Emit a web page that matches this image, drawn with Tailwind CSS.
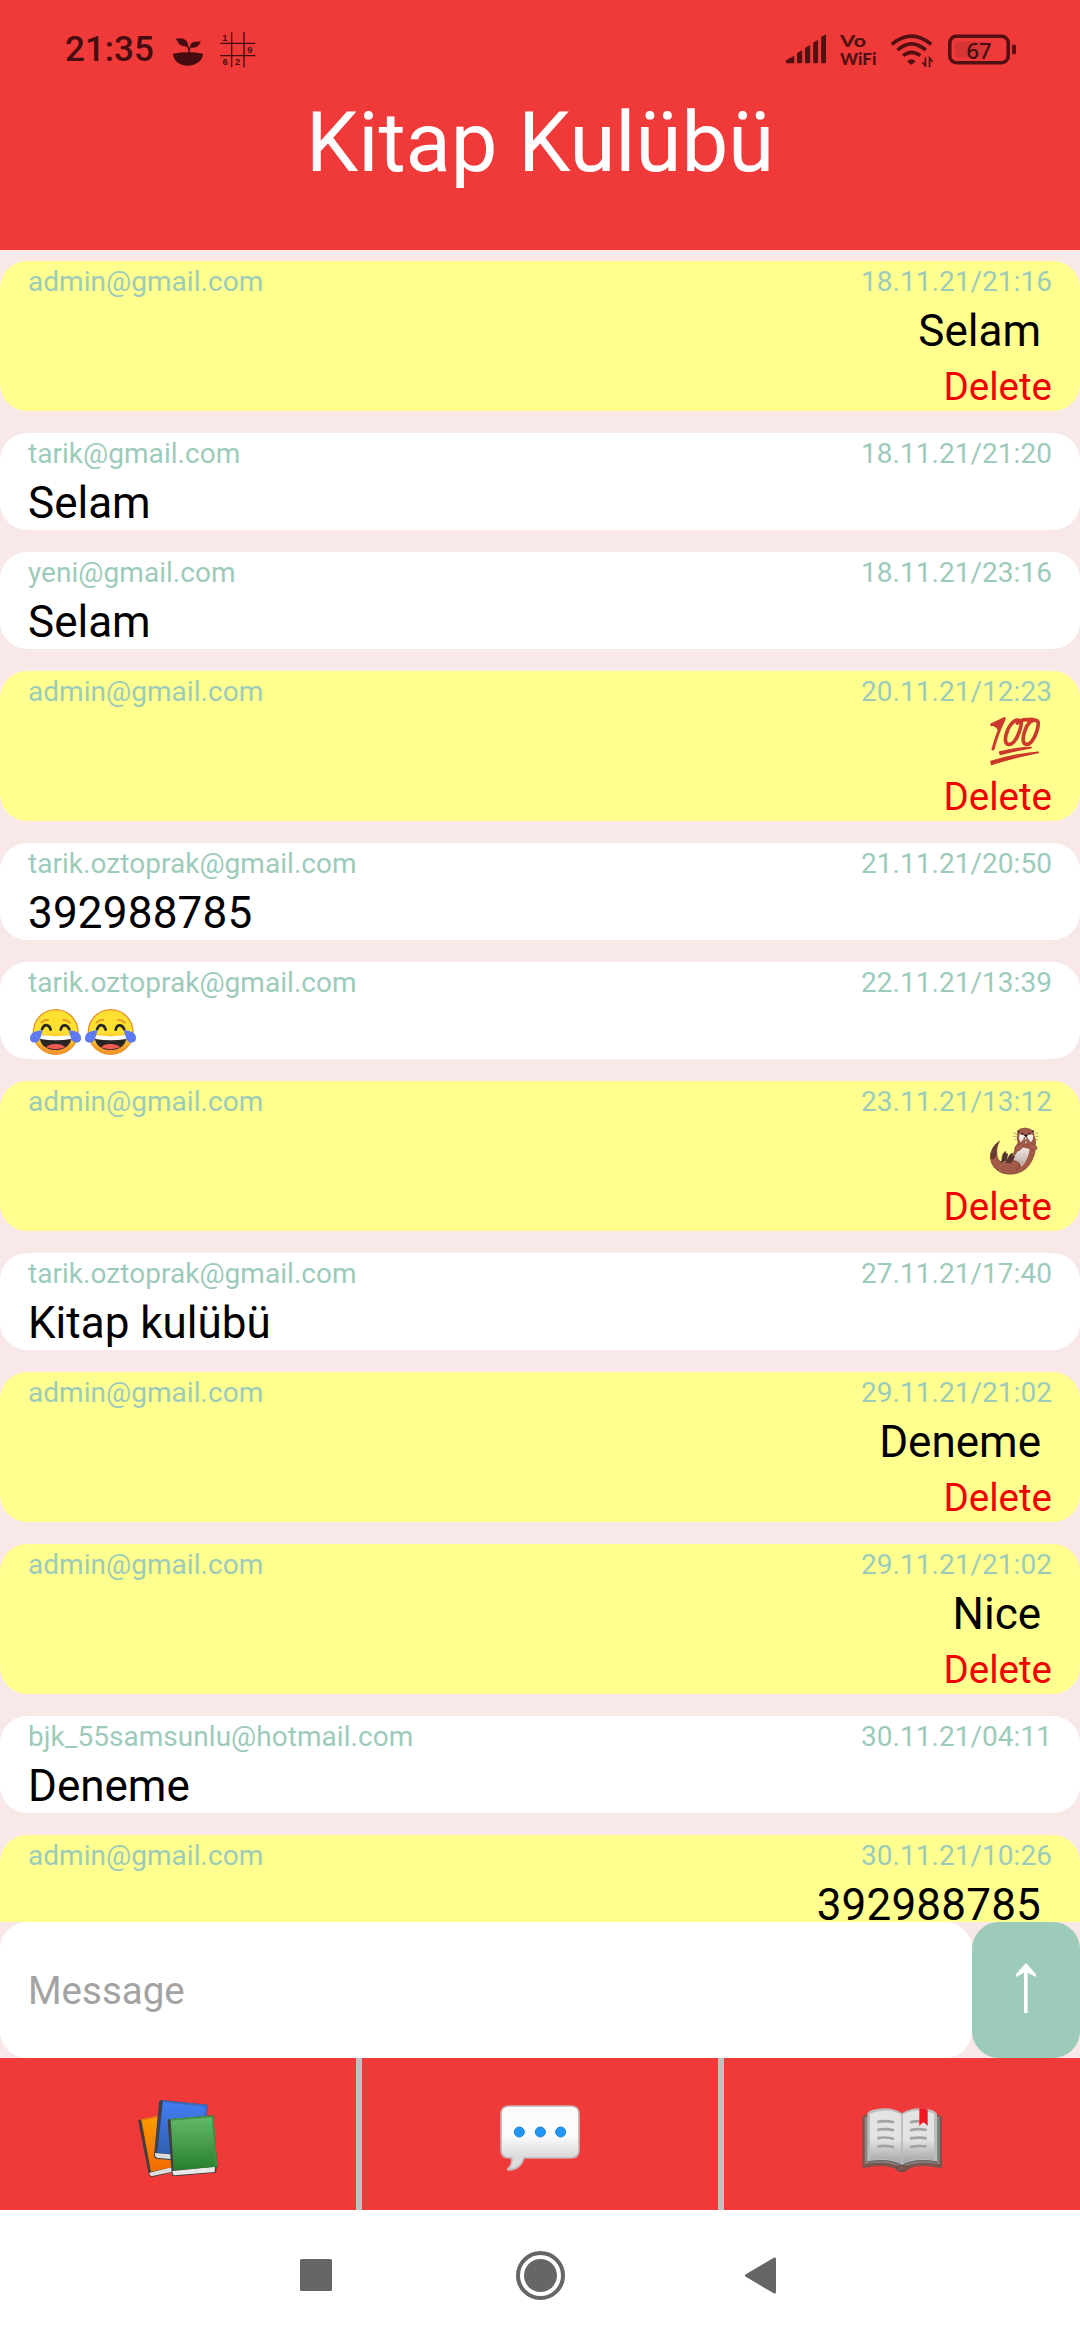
<!DOCTYPE html>
<html lang="tr">
<head>
<meta charset="utf-8">
<title>Kitap Kulübü</title>
<script src="https://cdn.jsdelivr.net/npm/@tailwindcss/browser@4"></script>
</head>
<body class="h-[2340px] w-[1080px] overflow-hidden bg-white font-[Roboto,sans-serif]">
<div class="flex h-[2340px] w-[1080px] flex-col">

  <header class="flex h-[250px] flex-none flex-col bg-[#f03a39] text-[#460d10]">
    <div class="flex h-[94px] items-start justify-between pt-8 pr-[64px] pl-[65px]">
      <div class="flex h-9 items-center">
        <span class="w-[108px] text-[35px] leading-9 font-medium">21:35</span>
        <!-- sprout -->
        <svg class="h-9 w-[30px]" viewBox="502 94 87 108" preserveAspectRatio="none" fill="currentColor">
          <path d="M502 159Q545 151 589 159Q589 174 574 186Q561 195 545 195Q528 195 516 186Q502 174 502 159Z"/>
          <path d="M510 114Q531 110 541 120Q547 127 546 138Q530 140 520 131Q515 120 510 114Z"/>
          <path d="M583 122Q575 124 566 123Q551 125 551 140Q566 143 575 136Q580 130 583 122Z"/>
          <path d="M540 132Q549 137 549 158M549 145Q552 139 560 137" fill="none" stroke="currentColor" stroke-width="4.500"/>
        </svg>
        <!-- number grid -->
        <svg class="ml-[17px] h-9 w-[36px]" viewBox="639 94 105 108" preserveAspectRatio="none" fill="currentColor">
          <path d="M673 94V200M709 94V200M640 128H742M640 165H742" stroke="currentColor" stroke-width="4"/>
          <g font-family="Liberation Sans, sans-serif" font-size="27" font-weight="bold" text-anchor="middle">
            <text x="653" y="120">1</text><text x="726" y="157">9</text><text x="654" y="194">6</text><text x="690" y="194">2</text>
          </g>
        </svg>
      </div>
      <div class="flex h-9 items-center">
        <!-- signal -->
        <svg class="h-9 w-[40px]" viewBox="714 95 116 108" preserveAspectRatio="none" fill="#521012">
          <path d="M714 180L738 166V189H717Q714 189 714 186ZM746 158L761 150V186Q761 189 758 189H749Q746 189 746 186ZM769 143L784 134V186Q784 189 781 189H772Q769 189 769 186ZM793 127L807 118V186Q807 189 804 189H796Q793 189 793 186ZM816 110L830 102V186Q830 189 827 189H819Q816 189 816 186Z"/>
        </svg>
        <svg class="ml-[14px] h-9 w-[37px]" viewBox="0 0 37 36" fill="#521012" font-family="Lato, sans-serif" font-weight="900">
          <text x="0" y="15" font-size="17.500" textLength="26" lengthAdjust="spacingAndGlyphs">Vo</text>
          <text x="0" y="32.500" font-size="17.500" textLength="36.500" lengthAdjust="spacingAndGlyphs">WiFi</text>
        </svg>
        <!-- wifi -->
        <svg class="ml-[13px] h-9 w-[43px]" viewBox="1015 95 125 108" preserveAspectRatio="none" fill="none" stroke="#521012">
          <path d="M1020 132Q1077 83 1135 132M1037 149Q1077 112 1119 149M1053 166Q1077 146 1103 166" stroke-width="10.500"/>
          <path d="M1065 183Q1077 170 1090 183L1081 191Q1077 194 1073 191Z" fill="#521012" stroke="none"/>
          <path d="M1118 171V200M1109 186L1118 197M1130 201V173L1139 184" stroke-width="5"/>
        </svg>
        <!-- battery -->
        <svg class="ml-[15px] h-9 w-[68px]" viewBox="948 31.500 68 36">
          <rect x="949.800" y="35.800" width="58.400" height="26.400" rx="6.500" fill="none" stroke="#521012" stroke-width="3.600"/>
          <rect x="955" y="41" width="31" height="16" rx="2" fill="#d63435"/>
          <rect x="1012" y="44" width="4" height="10" rx="1.800" fill="#521012"/>
          <text x="979" y="58" text-anchor="middle" font-family="Noto Sans, sans-serif" font-weight="500" font-size="22" fill="#460d10">67</text>
        </svg>
      </div>
    </div>
    <h1 class="text-center text-[83.2px] leading-[98px] text-white">Kitap Kulübü</h1>
  </header>

  <main class="flex h-[1672px] flex-none flex-col gap-[22px] overflow-hidden bg-[#f8e8e8] pt-[11px] text-[44px] leading-[52px] text-black">

    <article class="h-[150px] flex-none rounded-[27px] bg-[#ffff90] px-7 pt-[3px]">
      <div class="flex justify-between text-[28px] leading-9 tracking-[0.04px] text-[#9dcbba]"><span>admin@gmail.com</span><time>18.11.21/21:16</time></div>
      <p class="mt-[5px] pr-[11px] text-right">Selam</p>
      <p class="mt-[6px] text-right text-[38.5px] leading-[48px] text-[#f00000]">Delete</p>
    </article>

    <article class="h-[97px] flex-none rounded-[27px] bg-white px-7 pt-[3px]">
      <div class="flex justify-between text-[28px] leading-9 tracking-[0.04px] text-[#9dcbba]"><span>tarik@gmail.com</span><time>18.11.21/21:20</time></div>
      <p class="mt-[5px]">Selam</p>
    </article>

    <article class="h-[97px] flex-none rounded-[27px] bg-white px-7 pt-[3px]">
      <div class="flex justify-between text-[28px] leading-9 tracking-[0.04px] text-[#9dcbba]"><span>yeni@gmail.com</span><time>18.11.21/23:16</time></div>
      <p class="mt-[5px]">Selam</p>
    </article>

    <article class="h-[150px] flex-none rounded-[27px] bg-[#ffff90] px-7 pt-[3px]">
      <div class="flex justify-between text-[28px] leading-9 tracking-[0.04px] text-[#9dcbba]"><span>admin@gmail.com</span><time>20.11.21/12:23</time></div>
      <div class="mt-[5px] flex justify-end pr-[11px]">
        <!-- hundred points -->
        <svg class="h-[52px] w-[55px]" viewBox="78 75 165 156" fill="none" stroke="#cc3a2d" stroke-linecap="round" stroke-linejoin="round">
          <path d="M95 104Q114 96 133 86Q113 127 99 177" stroke-width="9"/>
          <path d="M95 105Q114 98 128 89L115 120Q110 107 95 105Z" fill="#cc3a2d" stroke-width="4"/>
          <path d="M179 92C166 85 151 101 143 120C134 143 133 161 145 163C157 166 171 147 178 125C185 104 187 92 176 91" stroke-width="11"/>
          <path d="M172 99Q187 87 200 89M229 92C216 85 202 101 195 121C187 144 187 161 198 163C210 166 223 147 230 125C236 105 238 92 227 91Q215 86 200 90" stroke-width="11"/>
          <path d="M119 186Q166 174 213 173Q166 181 121 193ZM93 215Q160 193 235 187Q157 203 95 223Z" fill="#c93024" stroke-width="5"/>
        </svg>
      </div>
      <p class="mt-[6px] text-right text-[38.5px] leading-[48px] text-[#f00000]">Delete</p>
    </article>

    <article class="h-[97px] flex-none rounded-[27px] bg-white px-7 pt-[3px]">
      <div class="flex justify-between text-[28px] leading-9 tracking-[0.04px] text-[#9dcbba]"><span>tarik.oztoprak@gmail.com</span><time>21.11.21/20:50</time></div>
      <p class="mt-[5px] tracking-[0.2px]">392988785</p>
    </article>

    <article class="h-[97px] flex-none rounded-[27px] bg-white px-7 pt-[3px]">
      <div class="flex justify-between text-[28px] leading-9 tracking-[0.04px] text-[#9dcbba]"><span>tarik.oztoprak@gmail.com</span><time>22.11.21/13:39</time></div>
      <div class="mt-[5px] flex">
        <!-- tears of joy, twice -->
        <svg class="h-[52px] w-[110px]" viewBox="84 48 330 156">
          <defs>
            <linearGradient id="face" x1="0" y1="0" x2="0" y2="1"><stop offset="0.500" stop-color="#fde030"/><stop offset="0.920" stop-color="#f9962a"/></linearGradient>
            <g id="joy">
              <circle cx="167" cy="126" r="67" fill="url(#face)" stroke="#e5932a" stroke-width="4"/>
              <path d="M125 97Q133 88 144 90M190 90Q201 89 209 98" fill="none" stroke="#e8952a" stroke-width="6" stroke-linecap="round"/>
              <path d="M126 118Q132 103 141 106Q149 107 152 119M182 119Q185 106 194 106Q203 106 208 118" fill="none" stroke="#2a2624" stroke-width="8" stroke-linecap="round"/>
              <path d="M118 136Q166 143 216 136Q212 180 167 180Q121 180 118 136Z" fill="#2a2525"/>
              <path d="M119 135Q166 142 215 135L213 147Q167 155 121 147Z" fill="#fff"/>
              <path d="M137 172Q151 160 166 162Q182 160 197 172Q167 183 137 172Z" fill="#ef5b52"/>
              <path d="M128 121Q99 122 91 137Q87 152 98 157Q111 162 118 150Q123 141 128 121ZM206 121Q235 122 242 137Q246 152 235 157Q223 162 216 150Q211 141 206 121Z" fill="#5e7af2"/>
            </g>
          </defs>
          <use href="#joy"/><use href="#joy" x="165"/>
        </svg>
      </div>
    </article>

    <article class="h-[150px] flex-none rounded-[27px] bg-[#ffff90] px-7 pt-[3px]">
      <div class="flex justify-between text-[28px] leading-9 tracking-[0.04px] text-[#9dcbba]"><span>admin@gmail.com</span><time>23.11.21/13:12</time></div>
      <div class="mt-[5px] flex justify-end pr-[11px]">
        <!-- otter -->
        <svg class="h-[52px] w-[55px]" viewBox="78 75 165 156" stroke-linecap="round" stroke-linejoin="round">
          <defs><linearGradient id="belly" x1="0" y1="0" x2="0" y2="1"><stop offset="0" stop-color="#f0e9e4"/><stop offset="1" stop-color="#b9a39b"/></linearGradient></defs>
          <path d="M118 124Q91 142 91 173Q94 205 126 219Q157 228 186 214Q205 204 217 179Q228 158 224 143Q231 122 221 106Q222 91 209 87Q196 81 181 87Q170 91 173 103Q171 116 174 128Q164 144 159 168Q145 190 129 188Q110 184 110 153Q110 138 118 124Z" fill="#a35a47" stroke="#7a4336" stroke-width="2"/>
          <path d="M118 124Q91 142 91 173Q96 181 103 176Q112 165 110 150Q111 137 118 124Z" fill="#6b3b32"/>
          <path d="M186 142Q164 158 160 181Q177 187 185 201Q205 180 209 147Z" fill="url(#belly)"/>
          <path d="M124 188L128 164L136 154L137 160L143 162L139 183M137 188L149 165L157 159V166L163 171L151 190" fill="#55342f" stroke="#3f2926" stroke-width="2"/>
          <path d="M137 187Q165 177 177 189Q183 201 169 210" fill="none" stroke="#6b382c" stroke-width="2.500"/>
          <path d="M178 105Q183 99 195 109Q207 99 219 105Q221 123 208 130H187Q175 124 178 105Z" fill="#f4eeea"/>
          <path d="M194 113Q200 124 190 137Q185 148 176 152Q163 151 165 141Q171 134 181 132ZM200 113Q196 124 205 137Q211 150 224 152Q234 148 230 140Q225 134 215 131Z" fill="#a85e4b" stroke="#7a4336" stroke-width="2"/>
          <circle cx="187" cy="101" r="3" fill="#251b1a"/><circle cx="208" cy="101" r="3" fill="#251b1a"/>
          <path d="M192 105Q198 101 204 105L198 113Z" fill="#251b1a"/>
          <path d="M172 103L160 98M172 109L160 109M174 114L164 119M222 103L234 98M222 109L235 109M221 114L233 119" stroke="#8c7757" stroke-width="1.800"/>
          <circle cx="176" cy="94" r="3.500" fill="#55342f"/><circle cx="219" cy="94" r="3.500" fill="#55342f"/>
        </svg>
      </div>
      <p class="mt-[6px] text-right text-[38.5px] leading-[48px] text-[#f00000]">Delete</p>
    </article>

    <article class="h-[97px] flex-none rounded-[27px] bg-white px-7 pt-[3px]">
      <div class="flex justify-between text-[28px] leading-9 tracking-[0.04px] text-[#9dcbba]"><span>tarik.oztoprak@gmail.com</span><time>27.11.21/17:40</time></div>
      <p class="mt-[5px]">Kitap kulübü</p>
    </article>

    <article class="h-[150px] flex-none rounded-[27px] bg-[#ffff90] px-7 pt-[3px]">
      <div class="flex justify-between text-[28px] leading-9 tracking-[0.04px] text-[#9dcbba]"><span>admin@gmail.com</span><time>29.11.21/21:02</time></div>
      <p class="mt-[5px] pr-[11px] text-right">Deneme</p>
      <p class="mt-[6px] text-right text-[38.5px] leading-[48px] text-[#f00000]">Delete</p>
    </article>

    <article class="h-[150px] flex-none rounded-[27px] bg-[#ffff90] px-7 pt-[3px]">
      <div class="flex justify-between text-[28px] leading-9 tracking-[0.04px] text-[#9dcbba]"><span>admin@gmail.com</span><time>29.11.21/21:02</time></div>
      <p class="mt-[5px] pr-[11px] text-right">Nice</p>
      <p class="mt-[6px] text-right text-[38.5px] leading-[48px] text-[#f00000]">Delete</p>
    </article>

    <article class="h-[97px] flex-none rounded-[27px] bg-white px-7 pt-[3px]">
      <div class="flex justify-between text-[28px] leading-9 tracking-[0.04px] text-[#9dcbba]"><span>bjk_55samsunlu@hotmail.com</span><time>30.11.21/04:11</time></div>
      <p class="mt-[5px]">Deneme</p>
    </article>

    <article class="h-[150px] flex-none rounded-[27px] bg-[#ffff90] px-7 pt-[3px]">
      <div class="flex justify-between text-[28px] leading-9 tracking-[0.04px] text-[#9dcbba]"><span>admin@gmail.com</span><time>30.11.21/10:26</time></div>
      <p class="mt-[5px] pr-[11px] text-right tracking-[0.2px]">392988785</p>
    </article>
  </main>

  <form class="flex h-[136px] flex-none bg-[#f8e8e8]">
    <div class="flex w-[972px] items-center rounded-[27px] bg-white px-7 pt-0.5 text-[38.5px] text-[#a3a3a3]">Message</div>
    <button type="button" class="flex w-[108px] items-center justify-center rounded-[27px] bg-[#9dcbba]">
      <svg class="-mt-1 h-[50px] w-5" viewBox="708 399 60 150"><path d="M738 399L768 433V441L743 428V549H732V428L708 441V433Z" fill="#fff"/></svg>
    </button>
  </form>

  <nav class="grid h-[152px] flex-none grid-cols-3 gap-1.5 bg-[#c1c1c1]">
    <a class="flex items-center justify-center bg-[#f03a39]">
      <!-- books -->
      <svg class="size-[90px]" viewBox="99 117 270 270" stroke-linejoin="round">
        <defs>
          <linearGradient id="orange" x1="0" y1="0" x2="0" y2="1"><stop stop-color="#ff9c00"/><stop offset="1" stop-color="#f06c00"/></linearGradient>
          <linearGradient id="blue" x1="0" y1="0" x2="0" y2="1"><stop stop-color="#427ff5"/><stop offset="1" stop-color="#305dac"/></linearGradient>
          <linearGradient id="green" x1="0" y1="0" x2="0" y2="1"><stop stop-color="#66ba6a"/><stop offset="1" stop-color="#28802d"/></linearGradient>
        </defs>
        <path d="M115 215Q114 209 121 208L210 193L239 362L157 381Q149 383 146 373Z" fill="#493c3b"/>
        <path d="M148 368L225 349V364L157 378Q149 379 148 368Z" fill="#ddd"/>
        <path d="M124 209L205 192L235 347L153 365Z" fill="url(#orange)"/>
        <path d="M122 210L205 194" stroke="#e77d08" stroke-width="5"/>
        <path d="M177 156Q178 150 185 150L323 164L311 338L168 326Q161 324 162 316Z" fill="#3d4250"/>
        <path d="M165 309L300 320V335L171 323Q164 321 165 309Z" fill="#dadcdd"/>
        <path d="M189 152L323 165L307 320L172 308Z" fill="url(#blue)"/>
        <path d="M188 154L320 167L316 205" fill="none" stroke="#3d69bd" stroke-width="6"/>
        <path d="M203 214Q202 208 210 207L340 196L352 345L348 368L223 379Q216 379 215 371Z" fill="#423f40"/>
        <path d="M218 363L345 350L344 366L223 376Q217 375 218 363Z" fill="#e9e9e9"/>
        <path d="M212 207L340 197L352 350L221 361Z" fill="url(#green)"/>
        <path d="M211 210L338 199L349 349" fill="none" stroke="#3f9443" stroke-width="5"/>
      </svg>
    </a>
    <a class="flex items-center justify-center bg-[#f03a39]">
      <!-- speech balloon -->
      <svg class="size-[90px]" viewBox="105 87 270 270">
        <defs><linearGradient id="balloon" x1="0" y1="0" x2="0" y2="1"><stop offset="0.450" stop-color="#fcfcfc"/><stop offset="0.780" stop-color="#dcdcdc"/></linearGradient></defs>
        <path d="M148 138H332Q357 138 357 162V270Q357 294 332 294H192Q180 331 144 330Q141 328 145 325Q157 314 155 294H148Q123 294 123 270V162Q123 138 148 138Z" fill="url(#balloon)" stroke="#c5b3b3" stroke-width="5"/>
        <g fill="#2196f3" stroke="#1e83d3" stroke-width="3"><circle cx="178" cy="216" r="15"/><circle cx="241" cy="216" r="15"/><circle cx="302" cy="216" r="15"/></g>
      </svg>
    </a>
    <a class="flex items-center justify-center bg-[#f03a39]">
      <!-- open book -->
      <svg class="size-[90px]" viewBox="171 117 270 270" stroke-linejoin="round">
        <defs><linearGradient id="page" x1="0" y1="0" x2="0" y2="1"><stop offset="0.550" stop-color="#e3e3e3"/><stop offset="1" stop-color="#a2a2a2"/></linearGradient></defs>
        <path d="M190 198L208 190H404L423 198Q426 199 426 204V348Q426 354 420 354Q357 341 325 357Q321 366 306 366Q292 366 287 357Q252 341 192 354Q187 353 187 347V204Q187 199 190 198Z" fill="#78564e"/>
        <path d="M194 200V342Q265 331 306 352Q348 331 419 342V200" fill="#8e827e"/>
        <path d="M202 190Q208 182 216 180Q270 166 306 190Q342 166 396 180Q405 183 411 191V337Q338 326 306 348Q272 326 202 337Z" fill="#bdbdbd"/>
        <path d="M202 336Q270 325 306 347Q340 325 411 336" fill="none" stroke="#67696b" stroke-width="4"/>
        <path d="M210 191Q267 170 306 195Q345 170 402 191V330Q338 320 306 341Q272 320 210 330Z" fill="url(#page)"/>
        <path d="M306 190V341" stroke="#b9b9b9" stroke-width="5"/>
        <path d="M232 216Q257 210 282 217M232 240Q257 234 282 241M232 265Q257 259 282 267M232 290Q257 284 282 292M330 217Q355 210 380 216M330 241Q355 234 380 240M330 266Q355 260 380 265M330 292Q355 285 380 290" fill="none" stroke="#a3a3a3" stroke-width="8"/>
        <path d="M358 175Q371 174 383 179V228L370 215L358 228Z" fill="#f21622"/>
        <ellipse cx="306" cy="355" rx="15" ry="9" fill="#7c574e" stroke="#5c413b" stroke-width="2"/>
      </svg>
    </a>
  </nav>

  <footer class="flex h-[130px] flex-none items-center bg-white pl-[300px]">
    <svg class="h-8 w-8" viewBox="0 0 32 32" fill="#666"><rect width="32" height="32" rx="1.500"/></svg>
    <svg class="ml-[184px] h-[49px] w-[49px]" viewBox="0 0 49 49" fill="#666"><circle cx="24.500" cy="24.500" r="22.500" fill="none" stroke="#666" stroke-width="4"/><circle cx="24.500" cy="24.500" r="16.500"/></svg>
    <svg class="ml-[180px] h-[37px] w-[31px]" viewBox="0 0 31 37" fill="#666" stroke="#666" stroke-width="3" stroke-linejoin="round"><path d="M1.500 18.500L29.500 2V35Z"/></svg>
  </footer>
</div>
</body>
</html>
